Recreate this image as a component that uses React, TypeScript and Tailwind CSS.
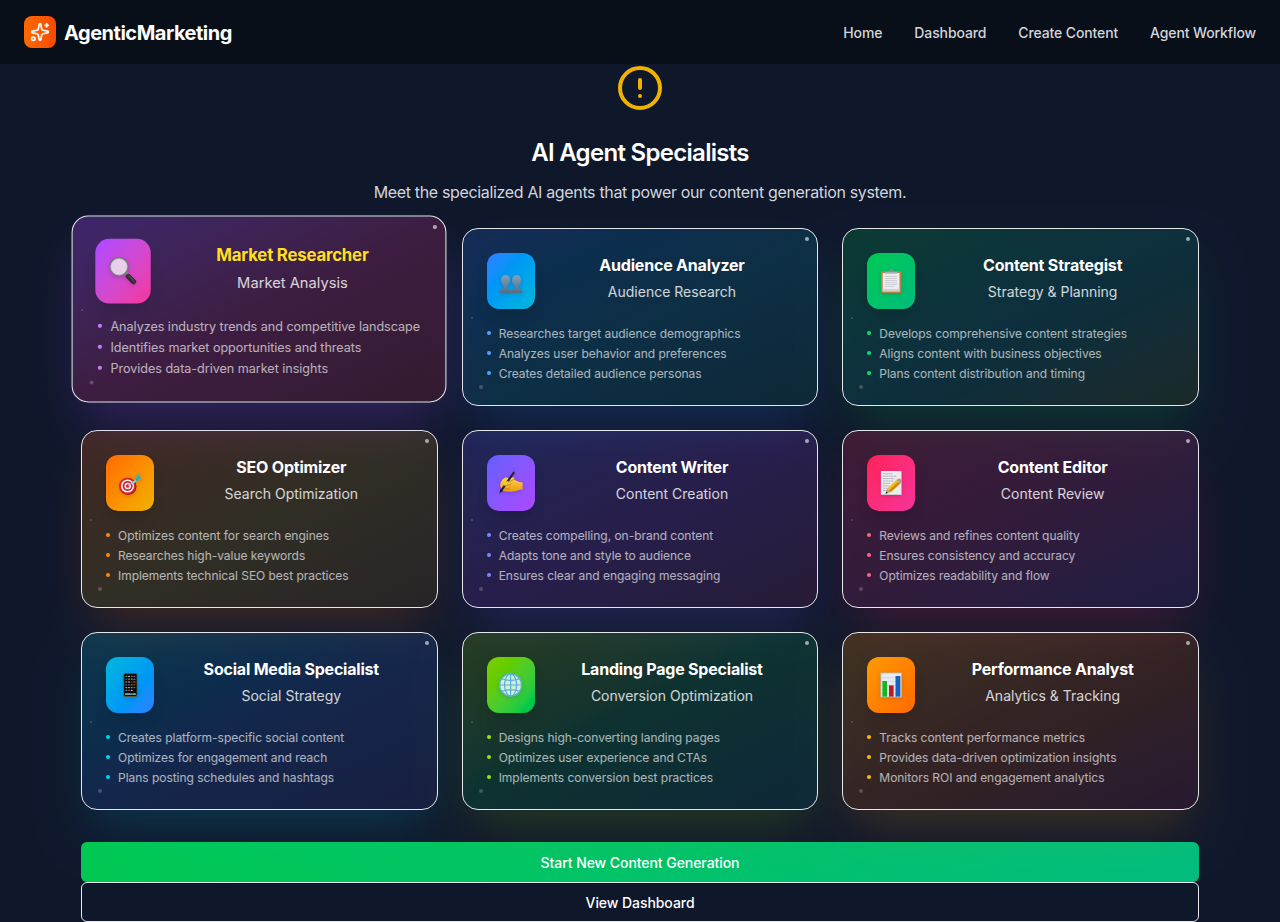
import type { ReactNode } from "react";
import { CircleAlert, Sparkles } from "lucide-react";

type Agent = {
  name: string;
  role: string;
  points: string[];
  card: string;
  tile: string;
  bullet: string;
  glyph: ReactNode;
  active?: boolean;
};

const Magnifier = () => (
  <>
    <defs>
      <linearGradient id="mag-handle" x1="0" y1="1" x2="1" y2="0">
        <stop offset="0" stopColor="#15151a" />
        <stop offset="0.5" stopColor="#3b3b40" />
        <stop offset="1" stopColor="#101012" />
      </linearGradient>
    </defs>
    <path d="M13.600 14.2l1.8-1.8 2 2-1.8 1.8z" fill="#8b8b90" />
    <path d="M16.400 16.4l4.800 4.800" stroke="url(#mag-handle)" strokeWidth="4.300" strokeLinecap="round" />
    <path d="M17 15.6l4.600 4.600" stroke="#6c6c72" strokeWidth="0.7" strokeLinecap="round" />
    <circle cx="8.500" cy="8.2" r="7.8" fill="#e8d0ec" stroke="#77737e" strokeWidth="1.5" />
    <circle cx="8.500" cy="8.2" r="7.1" fill="none" stroke="#c9c4cf" strokeWidth="0.6" />
  </>
);

const People = () => (
  <>
    <defs>
      <linearGradient id="people-fill" x1="0" y1="0" x2="0" y2="1">
        <stop offset="0" stopColor="#7fa0bd" />
        <stop offset="1" stopColor="#536d87" />
      </linearGradient>
    </defs>
    <g fill="url(#people-fill)">
      <path d="M6.6 6c2.8 0 4.5 2 4.5 5 0 2.600-1.300 4.900-2.600 6v1.600c0 1.500 3.700 1.500 3.700 4.600v.8H.6v-.8c0-3.100 4-3.100 4-4.600V17c-1.400-1.100-2.600-3.400-2.600-6 0-3 1.800-5 4.600-5z" />
      <path d="M17.600 6c2.800 0 4.500 2 4.500 5 0 2.600-1.300 4.900-2.600 6v1.600c0 1.500 3.900 1.500 3.900 4.600v.8H12.600v-.8c0-3.100 3-3.100 3-4.600V17c-1.400-1.100-2.600-3.400-2.600-6 0-3 1.800-5 4.600-5z" />
    </g>
  </>
);

const Clipboard = () => (
  <>
    <rect x="1.900" y="2" width="20.400" height="22" rx="1" fill="#b98142" />
    <rect x="3.700" y="4" width="16.800" height="18.400" fill="#ececef" />
    <path d="M3.700 22.400V20h16.800v2.400z" fill="#d0d0d5" />
    <path
      d="M6 7.500h12M6 9.500h12M6 11.500h12M6 13.500h12M6 15.500h12M6 17.500h9"
      stroke="#cbcbd1"
      strokeWidth="0.900"
    />
    <path d="M6.200 4.400V2.800h3.600C9.900 1.100 10.800.2 12.100.2s2.200.9 2.300 2.600H18v1.600z" fill="#8d959d" />
    <path d="M6.200 4.400v-.9H18v.9z" fill="#c3c8cd" />
    <circle cx="12.100" cy="1.900" r="0.700" fill="#3f8f6a" />
  </>
);

const Target = () => (
  <>
    <circle cx="10" cy="15.600" r="8.500" fill="#a3131f" />
    <circle cx="9.300" cy="15" r="8.300" fill="#d9222f" />
    <circle cx="9.500" cy="15" r="6.600" fill="#f6eeee" />
    <circle cx="9.600" cy="15" r="5" fill="#d42432" />
    <circle cx="9.700" cy="15" r="3.300" fill="#f6eeee" />
    <circle cx="9.700" cy="15" r="1.700" fill="#d42432" />
    <path d="M10 14.800l6-4.300" stroke="#8ba7ad" strokeWidth="1" />
    <path d="M12.600 12.600l5.800-4.600 1 1.500-5.200 3.900z" fill="#7fd6d6" />
    <path d="M17.200 8.600l1.400-4.300L22 2.600l-.3 3.200 2.300 2-5.600 2.700z" fill="#43b3b5" />
    <path d="M18 9l3.600-3.200" stroke="#237f86" strokeWidth="0.600" />
  </>
);

const WritingHand = () => (
  <>
    <defs>
      <linearGradient id="hand-fill" x1="0" y1="0" x2="0" y2="1">
        <stop offset="0" stopColor="#ffd54a" />
        <stop offset="1" stopColor="#e99a16" />
      </linearGradient>
    </defs>
    <path
      d="M1.200 13.500C1.700 10.500 3.500 8 6 6.700c1.400-.7 2.800-.1 3.200 1l4.200-1.200c1.900-.5 2.600 1 1.400 2l4.800 2.300 4 .6v7.200c-2.400-.4-4.100.6-6.300 1.400-3.800 1-8 .8-11.500.3-1.900-.3-2.400-1.400-2-2.400-1.700-.3-2.700-2.200-2.600-4.400z"
      fill="url(#hand-fill)"
    />
    <path
      d="M14.800 8.500l-4.600 2.300M4 17.800c2.500.6 5 .2 7-.9M5.800 13.600c1.800 1.200 4.800.8 6.300-.6"
      stroke="#bd720e"
      strokeWidth="0.700"
      fill="none"
      strokeLinecap="round"
    />
    <path d="M2.400 19.400L14.800 1.600" stroke="#26242a" strokeWidth="2.100" strokeLinecap="round" />
    <path d="M.3 22.400l1-4 2.300 1.700z" fill="#15141a" />
    <path d="M5.300 12.200c1.300-1.900 3.200-2.300 4.700-1.700l-2.300 3.600c-1 .8-2.400.8-3.200-.2z" fill="#ffca3a" />
  </>
);

const Memo = () => (
  <>
    <rect x="1.900" y="0" width="20.600" height="24" fill="#ececef" />
    <path d="M1.900 24v-1h20.600v1z" fill="#cdcdd2" />
    <path
      d="M4 2.800h9.500M4 5.200h14M4 7.600h11.500M4 10h10.500M4 12.400h7M4 14.800h6M4 17.200h4M4 19.600h4"
      stroke="#a8a8b0"
      strokeWidth="0.900"
      strokeDasharray="2.200 0.500"
    />
    <path d="M6.600 22.800l1.500-5.400 3.700 3.700z" fill="#b9a477" />
    <path d="M6.600 22.800l.7-2.300 1.500 1.500z" fill="#222" />
    <path d="M8.100 17.400l9.300-8.400 3.700 3.800-9.300 8.300z" fill="#f5bd1f" />
    <path d="M9.900 19.200l9.300-8.400 1.900 2-9.300 8.300z" fill="#cf8c12" />
    <path d="M17.400 9l1.200-1.100 3.700 3.800-1.200 1.100z" fill="#7cadaf" />
    <path d="M18.600 7.900c2.200-1.700 5.200 1.100 3.700 3.800z" fill="#ea7d78" />
  </>
);

const dotColors = [
  ["#3ed15c", "#d9d9df", "#8f8f98", "#9e78d1"],
  ["#3a80dd", "#e9913b", "#b9b9c2", "#5bc6e8"],
  ["#ece5a3", "#f1f1f1", "#de4a4f", "#ffb22e"],
  ["#4f9ee8", "#c051c6", "#56b95e", "#e06134"],
  ["#b5b5bf", "#e8cd4a", "#a8a8b0", "#6c86e0"],
  ["#2fb9d9", "#e24646", "#e8e8ea", "#000000"],
];

const Phone = () => (
  <>
    <rect x="5.400" y="0.100" width="14" height="23.800" rx="2" fill="#59544c" />
    <rect x="6.200" y="0.900" width="12.400" height="22.200" rx="1.400" fill="#08080b" />
    {dotColors.map((row, r) =>
      row.map((fill, c) => (
        <rect key={`${r}-${c}`} x={7.3 + c * 2.7} y={2.8 + r * 2.8} width="2" height="1.200" rx="0.400" fill={fill} opacity="0.800" />
      )),
    )}
    <rect x="7" y="20.200" width="10.900" height="1.900" rx="0.500" fill="#7b8287" />
    <path d="M7.500 21.100h2.200M15.100 21.100h2.200" stroke="#4be36b" strokeWidth="1.400" />
    <path d="M10.200 21.100h2" stroke="#63b4f4" strokeWidth="1.400" />
  </>
);

const Globe = () => (
  <>
    <defs>
      <linearGradient id="globe-fill" x1="0" y1="0" x2="0" y2="1">
        <stop offset="0" stopColor="#c9ecd9" />
        <stop offset="1" stopColor="#dff1cf" />
      </linearGradient>
    </defs>
    <circle cx="11.600" cy="12" r="11.300" fill="url(#globe-fill)" />
    <g fill="none" stroke="#55aedb" strokeWidth="1.200">
      <circle cx="11.600" cy="12" r="11" />
      <ellipse cx="11.600" cy="12" rx="6" ry="11" />
      <path d="M11.600 1v22M.6 12h22M2.800 5.700c5 2.100 12.600 2.100 17.600 0M2.800 18.300c5-2.100 12.600-2.100 17.600 0" />
    </g>
  </>
);

const BarChart = () => (
  <>
    <rect x="1.900" y="0" width="20.600" height="24" fill="#e6ebf2" />
    <path d="M2.300 4.700h19.800M2.300 8.500h19.800M2.300 12.500h19.800M2.300 16.500h19.800M2.300 20.500h19.800" stroke="#c5d2e0" strokeWidth="0.600" />
    <rect x="1.900" y="0" width="20.600" height="24" fill="none" stroke="#aebdcd" strokeWidth="0.800" />
    <rect x="3.400" y="8" width="4.600" height="15.600" fill="#17b51f" />
    <rect x="10" y="12.400" width="4.600" height="11.200" fill="#c01820" />
    <rect x="16.500" y="3" width="4.900" height="20.600" fill="#1762bd" />
  </>
);

const agents: Agent[] = [
  {
    name: "Market Researcher",
    role: "Market Analysis",
    points: [
      "Analyzes industry trends and competitive landscape",
      "Identifies market opportunities and threats",
      "Provides data-driven market insights",
    ],
    card: "from-purple-500/30 via-pink-500/20 to-red-500/15 shadow-purple-500/25",
    tile: "from-purple-500 to-pink-500",
    bullet: "bg-purple-400",
    glyph: <Magnifier />,
    active: true,
  },
  {
    name: "Audience Analyzer",
    role: "Audience Research",
    points: [
      "Researches target audience demographics",
      "Analyzes user behavior and preferences",
      "Creates detailed audience personas",
    ],
    card: "from-blue-500/20 via-cyan-500/15 to-teal-500/10 shadow-blue-500/20",
    tile: "from-blue-500 to-cyan-500",
    bullet: "bg-blue-400",
    glyph: <People />,
  },
  {
    name: "Content Strategist",
    role: "Strategy & Planning",
    points: [
      "Develops comprehensive content strategies",
      "Aligns content with business objectives",
      "Plans content distribution and timing",
    ],
    card: "from-green-500/20 via-teal-500/15 to-lime-500/10 shadow-green-500/20",
    tile: "from-green-500 to-emerald-500",
    bullet: "bg-green-400",
    glyph: <Clipboard />,
  },
  {
    name: "SEO Optimizer",
    role: "Search Optimization",
    points: [
      "Optimizes content for search engines",
      "Researches high-value keywords",
      "Implements technical SEO best practices",
    ],
    card: "from-orange-500/20 via-yellow-500/15 to-amber-500/10 shadow-orange-500/20",
    tile: "from-orange-500 to-yellow-500",
    bullet: "bg-orange-400",
    glyph: <Target />,
  },
  {
    name: "Content Writer",
    role: "Content Creation",
    points: [
      "Creates compelling, on-brand content",
      "Adapts tone and style to audience",
      "Ensures clear and engaging messaging",
    ],
    card: "from-indigo-500/20 via-purple-500/15 to-pink-500/10 shadow-indigo-500/20",
    tile: "from-indigo-500 to-purple-500",
    bullet: "bg-indigo-400",
    glyph: <WritingHand />,
  },
  {
    name: "Content Editor",
    role: "Content Review",
    points: [
      "Reviews and refines content quality",
      "Ensures consistency and accuracy",
      "Optimizes readability and flow",
    ],
    card: "from-rose-500/20 via-pink-500/15 to-purple-500/10 shadow-rose-500/20",
    tile: "from-rose-500 to-pink-500",
    bullet: "bg-rose-400",
    glyph: <Memo />,
  },
  {
    name: "Social Media Specialist",
    role: "Social Strategy",
    points: [
      "Creates platform-specific social content",
      "Optimizes for engagement and reach",
      "Plans posting schedules and hashtags",
    ],
    card: "from-cyan-500/20 via-blue-500/15 to-indigo-500/10 shadow-cyan-500/20",
    tile: "from-cyan-500 to-blue-500",
    bullet: "bg-cyan-400",
    glyph: <Phone />,
  },
  {
    name: "Landing Page Specialist",
    role: "Conversion Optimization",
    points: [
      "Designs high-converting landing pages",
      "Optimizes user experience and CTAs",
      "Implements conversion best practices",
    ],
    card: "from-lime-500/20 via-green-500/15 to-teal-500/10 shadow-lime-500/20",
    tile: "from-lime-500 to-green-500",
    bullet: "bg-lime-400",
    glyph: <Globe />,
  },
  {
    name: "Performance Analyst",
    role: "Analytics & Tracking",
    points: [
      "Tracks content performance metrics",
      "Provides data-driven optimization insights",
      "Monitors ROI and engagement analytics",
    ],
    card: "from-amber-500/20 via-orange-500/15 to-rose-500/10 shadow-amber-500/20",
    tile: "from-amber-500 to-orange-500",
    bullet: "bg-amber-400",
    glyph: <BarChart />,
  },
];

function AgentCard({ agent }: { agent: Agent }) {
  const lift = agent.active ? "z-10 -translate-x-[0.5px] -translate-y-2 scale-105" : "";
  return (
    <article
      className={`relative flex h-[178px] flex-col gap-4 rounded-2xl border border-gray-200 bg-linear-to-br p-6 shadow-2xl ${agent.card} ${lift}`}
    >
      <div className="flex gap-4">
        <div
          className={`flex h-14 w-12 shrink-0 items-center justify-center rounded-xl bg-linear-to-br shadow-lg ${agent.tile} ${agent.active ? "scale-110" : ""}`}
        >
          <svg viewBox="0 0 24 24" className="size-6 overflow-visible drop-shadow-sm" aria-hidden="true">
            {agent.glyph}
          </svg>
        </div>
        <div className="flex-1 text-center">
          <h3 className={`text-base font-bold tracking-[-0.2px] ${agent.active ? "text-yellow-300" : "text-white"}`}>
            {agent.name}
          </h3>
          <p className="mt-[5px] text-sm text-white/80">{agent.role}</p>
        </div>
      </div>
      <ul className="flex flex-col gap-1">
        {agent.points.map((point) => (
          <li key={point} className="flex items-center gap-2 text-xs whitespace-nowrap text-white/65">
            <span className={`size-1 shrink-0 rounded-full ${agent.bullet}`} />
            <span className="pt-0.5 leading-[14px] tracking-[-0.03px]">{point}</span>
          </li>
        ))}
      </ul>
      <span className="absolute top-2 right-2 size-1 rounded-full bg-white/60" />
      <span className="absolute bottom-4 left-4 size-1 rounded-full bg-white/20" />
      <span className="absolute top-1/2 left-2 size-0.5 rounded-full bg-white/20" />
    </article>
  );
}

export default function App() {
  return (
    <div className="h-[922px] overflow-hidden bg-slate-900 font-['Inter',sans-serif] text-white">
      <header className="flex h-16 items-center justify-between bg-[#090f19] px-6">
        <div className="flex items-center gap-2">
          <div className="flex size-8 items-center justify-center rounded-lg bg-linear-to-r from-[#ff6900] to-[#f54900]">
            <Sparkles className="size-5" />
          </div>
          <span className="pt-0.5 text-xl font-bold tracking-[-0.48px]">AgenticMarketing</span>
        </div>
        <nav className="flex gap-8 pt-0.5 text-sm font-medium tracking-[-0.12px] text-gray-300">
          <a>Home</a>
          <a>Dashboard</a>
          <a>Create Content</a>
          <a>Agent Workflow</a>
        </nav>
      </header>
      <main className="px-[81px]">
        <div className="flex flex-col items-center">
          <CircleAlert className="size-12 text-yellow-500" />
          <h2 className="mt-[25px] text-2xl font-semibold tracking-[-0.7px]">AI Agent Specialists</h2>
          <p className="mt-[11px] text-base tracking-[-0.345px] text-gray-300">
            Meet the specialized AI agents that power our content generation system.
          </p>
        </div>
        <div className="mt-6 grid grid-cols-3 gap-6">
          {agents.map((agent) => (
            <AgentCard key={agent.name} agent={agent} />
          ))}
        </div>
        <div className="mt-8 flex flex-col text-sm font-medium tracking-[-0.06px]">
          <button className="h-10 rounded-md bg-linear-to-r from-green-500 to-emerald-500 pt-0.5">
            Start New Content Generation
          </button>
          <button className="h-10 rounded-md border border-gray-200 bg-slate-900 pt-0.5">View Dashboard</button>
        </div>
      </main>
    </div>
  );
}
